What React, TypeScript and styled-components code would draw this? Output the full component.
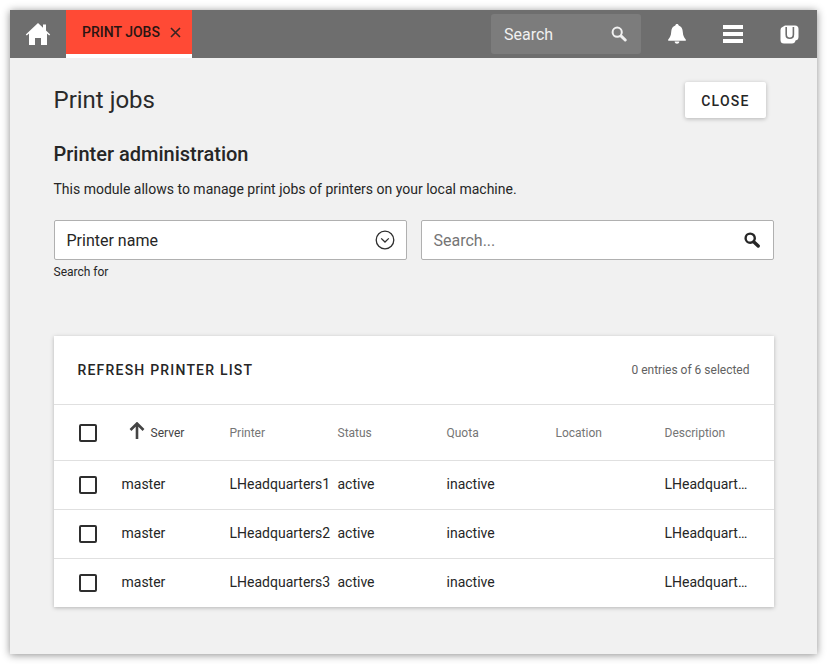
import React from 'react'
import styled, { createGlobalStyle } from 'styled-components'

const GlobalStyle = createGlobalStyle`
  html, body {
    margin: 0;
    padding: 0;
    background: #fff;
  }
  body {
    font-family: Roboto, "Open Sans", sans-serif;
    color: #262626;
  }
  * {
    box-sizing: border-box;
  }
`

const Page = styled.div`
  width: 827px;
  height: 664px;
  padding: 10px;
`

const Frame = styled.div`
  width: 807px;
  height: 644px;
  background: #f1f1f1;
  box-shadow: 0 1px 8px rgba(0, 0, 0, 0.45);
  display: flex;
  flex-direction: column;
`

const TopBar = styled.div`
  height: 48px;
  background: #6e6e6e;
  display: flex;
  align-items: stretch;
  flex-shrink: 0;
`

const HomeButton = styled.div`
  width: 56px;
  display: flex;
  align-items: center;
  justify-content: center;
`

const Tab = styled.div`
  width: 126px;
  background: #ff4a35;
  border-bottom: 4px solid #fff;
  display: flex;
  align-items: center;
  padding: 0 0 0 16px;
  font-size: 14px;
  font-weight: 500;
  color: #2b1512;
  gap: 10px;
  line-height: 16px;
`

const Spacer = styled.div`
  flex: 1;
`

const BarSearch = styled.div`
  width: 150px;
  height: 40px;
  margin-top: 4px;
  margin-right: 8px;
  background: #7c7c7c;
  border-radius: 3px;
  display: flex;
  align-items: center;
  justify-content: space-between;
  padding: 0 14px 0 13px;
  font-size: 16px;
  color: #f1f1f1;
`

const BarIcon = styled.div`
  width: 56px;
  display: flex;
  align-items: center;
  justify-content: center;
`

const Content = styled.div`
  flex: 1;
  padding: 24px 43px 0 44px;
`

const TitleRow = styled.div`
  display: flex;
  justify-content: space-between;
  align-items: center;
  height: 36px;
  padding-right: 8px;
`

const Title = styled.h1`
  margin: 0 0 0 -0.5px;
  font-size: 24px;
  font-weight: 400;
  line-height: 36px;
  color: #2a2a2a;
`

const CloseButton = styled.button`
  width: 81px;
  height: 36px;
  border: none;
  border-radius: 2px;
  background: #fff;
  box-shadow: 0 1px 4px rgba(0, 0, 0, 0.25);
  font-family: inherit;
  font-size: 14px;
  font-weight: 500;
  letter-spacing: 1.25px;
  color: #262626;
  padding: 1px 0 0;
`

const SectionTitle = styled.h2`
  margin: 22px 0 0 -0.5px;
  font-size: 20px;
  font-weight: 500;
  line-height: 28px;
  color: #262626;
`

const Intro = styled.p`
  margin: 11px 0 0 -0.5px;
  font-size: 14px;
  line-height: 20px;
  color: #262626;
`

const FilterRow = styled.div`
  display: grid;
  grid-template-columns: 353px 353px;
  column-gap: 14px;
  margin-top: 21px;
`

const Field = styled.div<{ $muted?: boolean }>`
  height: 40px;
  background: #fff;
  border: 1px solid #b0b0b0;
  border-radius: 2px;
  display: flex;
  align-items: center;
  justify-content: space-between;
  padding: 0 ${(props) => (props.$muted ? '13px' : '11px')} 0 11.5px;
  font-size: 16px;
  color: ${(props) => (props.$muted ? '#757575' : '#262626')};
`

const Hint = styled.div`
  margin: 4px 0 0 -0.5px;
  font-size: 12px;
  line-height: 16px;
  color: #262626;
`

const Card = styled.div`
  margin-top: 56px;
  width: 720px;
  background: #fff;
  box-shadow: 0 1px 4px rgba(0, 0, 0, 0.25);
`

const CardHeader = styled.div`
  height: 69px;
  border-bottom: 1px solid #e0e0e0;
  display: flex;
  align-items: center;
  justify-content: space-between;
  padding: 0 24.5px 0 23.5px;
`

const CardTitle = styled.div`
  font-size: 14px;
  font-weight: 500;
  letter-spacing: 1.2px;
  color: #262626;
`

const Selected = styled.div`
  font-size: 12px;
  color: #616161;
`

const Row = styled.div<{ $head?: boolean; $last?: boolean }>`
  height: ${(props) => (props.$head ? '56px' : props.$last ? '48px' : '49px')};
  border-bottom: ${(props) => (props.$last ? 'none' : '1px solid #e0e0e0')};
  display: grid;
  grid-template-columns: 67.5px 108px 108px 109px 109px 109px 109.5px;
  align-items: center;
  font-size: 14px;
  color: #262626;
`

const CheckCell = styled.div`
  padding-left: 25px;
  display: flex;
`

const Checkbox = styled.span`
  width: 18px;
  height: 18px;
  border: 2px solid #2e2e2e;
  border-radius: 2px;
  display: block;
`

const HeadCell = styled.div<{ $active?: boolean }>`
  font-size: 12px;
  color: ${(props) => (props.$active ? '#444' : '#757575')};
  display: flex;
  align-items: center;
`

const SortWrap = styled.span`
  display: flex;
  margin: -4px 5.5px 0 7.5px;
`

const Cell = styled.div`
  white-space: nowrap;
  padding-bottom: 2px;
`

const EllipsisCell = styled.div`
  white-space: nowrap;
  overflow: hidden;
  text-overflow: ellipsis;
  padding: 0 26px 2px 0;
`

const HomeIcon = () => (
  <svg width="26" height="24" viewBox="0 0 26 24">
    <path fill="#fff" d="M13 1 L0.8 12.6 L1.8 13.4 L4 11.4 V23 H10 V16 H16 V23 H22 V11.4 L24.2 13.4 L25.2 12.6 L21 8.6 V2.5 H18 V5.8 Z" />
  </svg>
)

const CloseIcon = () => (
  <svg width="11" height="11" viewBox="0 0 11 11">
    <path stroke="#3a2422" strokeWidth="1.6" fill="none" d="M1 1 L10 10 M10 1 L1 10" />
  </svg>
)

const LensIcon = ({ color, bold }: { color: string; bold?: boolean }) => (
  <svg width="16" height="16" viewBox="0 0 16 16">
    <circle cx="6.2" cy="6.2" r="4.6" fill="none" stroke={color} strokeWidth={bold ? 2.4 : 2} />
    <path stroke={color} strokeWidth={bold ? 3.4 : 3} strokeLinecap="round" d="M10.2 10.2 L14.2 14" />
  </svg>
)

const BellIcon = () => (
  <svg width="18" height="20" viewBox="0 0 18 20">
    <path fill="#fff" d="M9 0 C10 0 10.6 .7 10.7 1.6 C13.4 2.4 14.6 4.8 14.8 8 C15 11.5 16 13.6 17.8 15.6 V16.8 H0.2 V15.6 C2 13.6 3 11.5 3.2 8 C3.4 4.8 4.6 2.4 7.3 1.6 C7.4 .7 8 0 9 0 Z" />
    <path fill="#fff" d="M6.6 17.6 H11.4 C11.2 19 10.2 19.8 9 19.8 C7.8 19.8 6.8 19 6.6 17.6 Z" />
  </svg>
)

const MenuIcon = () => (
  <svg width="20" height="18" viewBox="0 0 20 18">
    <path fill="#fff" d="M0 0 H20 V4 H0 Z M0 7 H20 V11 H0 Z M0 14 H20 V18 H0 Z" />
  </svg>
)

const UserBadgeIcon = () => (
  <svg width="19" height="20" viewBox="0 0 19 20">
    <path fill="#fff" d="M5 1.5 H15 Q18.5 1.5 18.5 5 V13 Q18.5 16 15.5 16.5 Q15 19.5 12 19.5 H4 Q0.5 19.5 0.5 16 V6 Q0.5 3.5 2.5 3 Z" />
    <path fill="none" stroke="#6e6e6e" strokeWidth="1.6" d="M6.2 3 V10.4 Q6.2 14.2 9.8 14.2 Q13.4 14.2 13.4 10.4 V3" />
  </svg>
)

const ChevronCircleIcon = () => (
  <svg width="20" height="20" viewBox="0 0 20 20">
    <circle cx="10" cy="10" r="8.8" fill="none" stroke="#2e2e2e" strokeWidth="1.3" />
    <path fill="none" stroke="#2e2e2e" strokeWidth="1.3" d="M6.2 8.4 L10 12 L13.8 8.4" />
  </svg>
)

const SortUpIcon = () => (
  <svg width="16" height="17" viewBox="0 0 16 17">
    <path fill="none" stroke="#444" strokeWidth="2.6" d="M8 17 V2 M1.5 8 L8 1.5 L14.5 8" />
  </svg>
)

const rows = [
  { id: 1, printer: 'LHeadquarters1' },
  { id: 2, printer: 'LHeadquarters2' },
  { id: 3, printer: 'LHeadquarters3' },
]

const App = () => {
  return (
    <>
      <GlobalStyle />
      <Page>
        <Frame>
          <TopBar>
            <HomeButton>
              <HomeIcon />
            </HomeButton>
            <Tab>
              PRINT JOBS
              <CloseIcon />
            </Tab>
            <Spacer />
            <BarSearch>
              Search
              <LensIcon color="#f1f1f1" />
            </BarSearch>
            <BarIcon>
              <BellIcon />
            </BarIcon>
            <BarIcon>
              <MenuIcon />
            </BarIcon>
            <BarIcon>
              <UserBadgeIcon />
            </BarIcon>
          </TopBar>
          <Content>
            <TitleRow>
              <Title>Print jobs</Title>
              <CloseButton type="button">CLOSE</CloseButton>
            </TitleRow>
            <SectionTitle>Printer administration</SectionTitle>
            <Intro>This module allows to manage print jobs of printers on your local machine.</Intro>
            <FilterRow>
              <div>
                <Field>
                  Printer name
                  <ChevronCircleIcon />
                </Field>
                <Hint>Search for</Hint>
              </div>
              <Field $muted>
                Search...
                <LensIcon color="#262626" bold />
              </Field>
            </FilterRow>
            <Card>
              <CardHeader>
                <CardTitle>REFRESH PRINTER LIST</CardTitle>
                <Selected>0 entries of 6 selected</Selected>
              </CardHeader>
              <Row $head>
                <CheckCell>
                  <Checkbox />
                </CheckCell>
                <HeadCell $active>
                  <SortWrap>
                    <SortUpIcon />
                  </SortWrap>
                  Server
                </HeadCell>
                <HeadCell>Printer</HeadCell>
                <HeadCell>Status</HeadCell>
                <HeadCell>Quota</HeadCell>
                <HeadCell>Location</HeadCell>
                <HeadCell>Description</HeadCell>
              </Row>
              {rows.map((row, index) => (
                <Row key={row.id} $last={index === rows.length - 1}>
                  <CheckCell>
                    <Checkbox />
                  </CheckCell>
                  <Cell>master</Cell>
                  <Cell>{row.printer}</Cell>
                  <Cell>active</Cell>
                  <Cell>inactive</Cell>
                  <Cell />
                  <EllipsisCell>{row.printer}</EllipsisCell>
                </Row>
              ))}
            </Card>
          </Content>
        </Frame>
      </Page>
    </>
  )
}

export default App
